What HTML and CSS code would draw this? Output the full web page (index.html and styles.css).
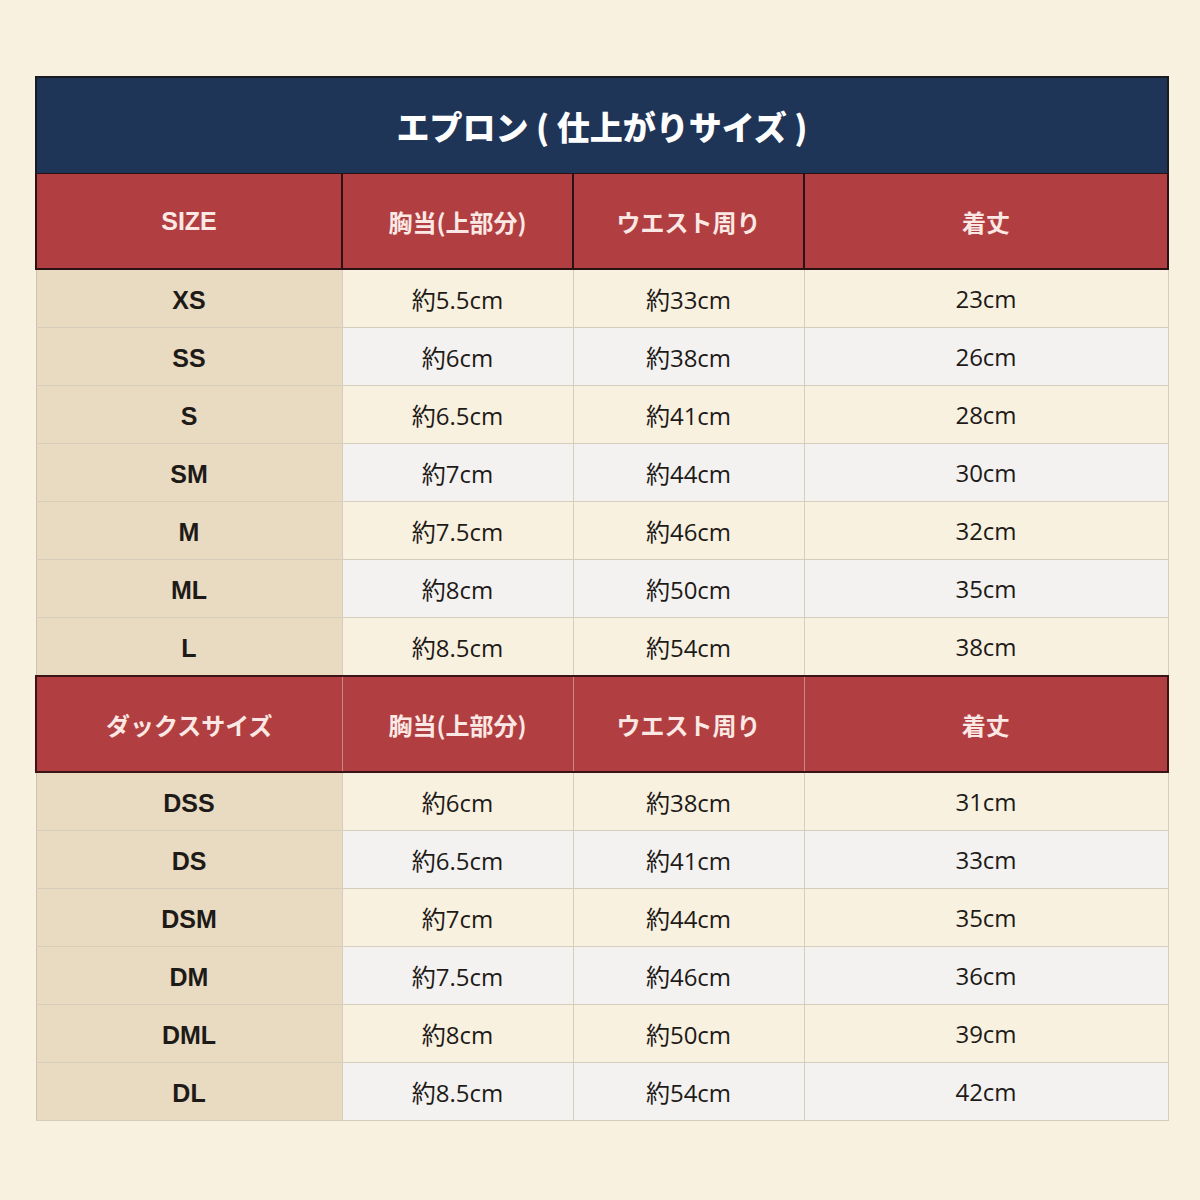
FILE: index.html
```html
<!DOCTYPE html>
<html lang="ja">
<head>
<meta charset="utf-8">
<link rel="stylesheet" href="styles.css">
</head>
<body>
<div class="page">
  <table class="chart">
    <colgroup>
      <col class="c1"><col class="c2"><col class="c3"><col class="c4">
    </colgroup>
    <tr class="title"><th colspan="4">エプロン ( 仕上がりサイズ )</th></tr>
    <tr class="head head1"><th>SIZE</th><th>胸当(上部分)</th><th>ウエスト周り</th><th>着丈</th></tr>
    <tr class="odd"><td class="sz">XS</td><td>約5.5cm</td><td>約33cm</td><td>23cm</td></tr>
    <tr class="even"><td class="sz">SS</td><td>約6cm</td><td>約38cm</td><td>26cm</td></tr>
    <tr class="odd"><td class="sz">S</td><td>約6.5cm</td><td>約41cm</td><td>28cm</td></tr>
    <tr class="even"><td class="sz">SM</td><td>約7cm</td><td>約44cm</td><td>30cm</td></tr>
    <tr class="odd"><td class="sz">M</td><td>約7.5cm</td><td>約46cm</td><td>32cm</td></tr>
    <tr class="even"><td class="sz">ML</td><td>約8cm</td><td>約50cm</td><td>35cm</td></tr>
    <tr class="odd"><td class="sz">L</td><td>約8.5cm</td><td>約54cm</td><td>38cm</td></tr>
    <tr class="head head2"><th>ダックスサイズ</th><th>胸当(上部分)</th><th>ウエスト周り</th><th>着丈</th></tr>
    <tr class="odd"><td class="sz">DSS</td><td>約6cm</td><td>約38cm</td><td>31cm</td></tr>
    <tr class="even"><td class="sz">DS</td><td>約6.5cm</td><td>約41cm</td><td>33cm</td></tr>
    <tr class="odd"><td class="sz">DSM</td><td>約7cm</td><td>約44cm</td><td>35cm</td></tr>
    <tr class="even"><td class="sz">DM</td><td>約7.5cm</td><td>約46cm</td><td>36cm</td></tr>
    <tr class="odd"><td class="sz">DML</td><td>約8cm</td><td>約50cm</td><td>39cm</td></tr>
    <tr class="even"><td class="sz">DL</td><td>約8.5cm</td><td>約54cm</td><td>42cm</td></tr>
  </table>
</div>
</body>
</html>
```
FILE: styles.css
```css
html, body {
  margin: 0;
  padding: 0;
  background: #f8f1df;
}
body {
  font-family: "Open Sans", "Noto Sans CJK JP", sans-serif;
  color: #1e1a18;
}
.page {
  padding: 76px 32px 0 35px;
}
.chart {
  width: 1132px;
  border-collapse: collapse;
  table-layout: fixed;
}
.c1 { width: 306px; }
.c2 { width: 231px; }
.c3 { width: 231px; }
.c4 { width: 364px; }

.title th {
  background: #1f3558;
  height: 95px;
  padding: 0;
  color: #ffffff;
  font-family: "Noto Sans CJK JP", sans-serif;
  font-weight: 900;
  font-size: 33px;
  border: 2px solid #1b1b22;
  border-bottom: none;
}
.head th {
  background: #b13e40;
  color: #fbe8e4;
  font-family: "Noto Sans CJK JP", sans-serif;
  font-weight: 700;
  font-size: 24px;
  padding: 0;
}
.head1 th {
  height: 94px;
  border: 2px solid #2a1214;
  border-top: 1px solid #2a1214;
}
.head1 th:first-child {
  font-family: "Liberation Sans", "Noto Sans CJK JP", sans-serif;
  font-size: 25px;
}
.head2 th {
  height: 94px;
  border-top: 2px solid #3a1416;
  border-bottom: 2px solid #3a1416;
  border-left: 1px solid #c98a86;
  border-right: 1px solid #c98a86;
}
.head2 th:first-child { border-left: 2px solid #3a1416; }
.head2 th:last-child { border-right: 2px solid #3a1416; }

td {
  height: 57px;
  padding: 0;
  text-align: center;
  font-size: 24px;
  font-family: "Open Sans", "Noto Sans CJK JP", sans-serif;
  font-weight: 400;
  border: 1px solid #d6ceba;
}
.odd td { background: #f8f1df; }
.even td { background: #f3f2f0; }
td.sz {
  background: #e9dbc1;
  font-weight: 700;
  font-size: 25px;
  font-family: "Liberation Sans", "Noto Sans CJK JP", sans-serif;
  height: 53px;
  padding-top: 4px;
}
td:first-child { border-left: 1px solid #cfc4ab; }
```
